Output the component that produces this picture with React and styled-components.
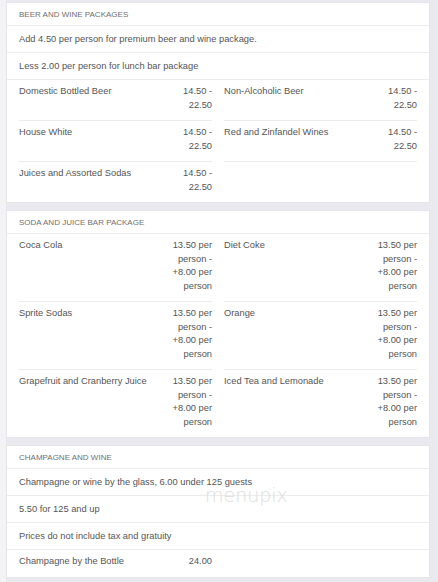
import styled, { createGlobalStyle } from "styled-components";

const GlobalStyle = createGlobalStyle`
    * { box-sizing: border-box; }
    body {
        margin: 0;
        background: #eeeef2;
        font-family: "Liberation Sans", Arial, sans-serif;
    }
`;

const sections = [
    {
        title: "Beer and Wine Packages",
        notes: [
            "Add 4.50 per person for premium beer and wine package.",
            "Less 2.00 per person for lunch bar package",
        ],
        items: [
            ["Domestic Bottled Beer", "14.50 - 22.50"],
            ["Non-Alcoholic Beer", "14.50 - 22.50"],
            ["House White", "14.50 - 22.50"],
            ["Red and Zinfandel Wines", "14.50 - 22.50"],
            ["Juices and Assorted Sodas", "14.50 - 22.50"],
        ],
    },
    {
        title: "Soda and Juice Bar Package",
        notes: [],
        items: [
            ["Coca Cola", "13.50 per person - +8.00 per person"],
            ["Diet Coke", "13.50 per person - +8.00 per person"],
            ["Sprite Sodas", "13.50 per person - +8.00 per person"],
            ["Orange", "13.50 per person - +8.00 per person"],
            ["Grapefruit and Cranberry Juice", "13.50 per person - +8.00 per person"],
            ["Iced Tea and Lemonade", "13.50 per person - +8.00 per person"],
        ],
    },
    {
        title: "Champagne and Wine",
        notes: [
            "Champagne or wine by the glass, 6.00 under 125 guests",
            "5.50 for 125 and up",
            "Prices do not include tax and gratuity",
        ],
        items: [["Champagne by the Bottle", "24.00"]],
    },
];

export default function App() {
    return (
        <>
            <GlobalStyle />
            <Page>
                {sections.map(section => {
                    const lastRowStart = section.items.length - (section.items.length % 2 === 0 ? 2 : 1);
                    return (
                        <Card key={section.title}>
                            <Header>{section.title}</Header>
                            {section.notes.map(note => (
                                <Note key={note}>{note}</Note>
                            ))}
                            <Items>
                                {section.items.map(([name, price], i) => (
                                    <Item key={name} $last={i >= lastRowStart}>
                                        <Name>{name}</Name>
                                        <Price>{price}</Price>
                                    </Item>
                                ))}
                            </Items>
                        </Card>
                    );
                })}
                <Watermark>menupix</Watermark>
            </Page>
        </>
    );
}

const Page = styled.div`
    position: relative;
    width: 438px;
    padding: 2px 8px 6px 6px;
    display: flex;
    flex-direction: column;
    gap: 7px;
    background: linear-gradient(to right, #f3f3f5 0, #f3f3f5 6px, #e9e9ef 6px);
`;

const Card = styled.div`
    background: #ffffff;
    border: 1px solid #e6e6ea;
`;

const Header = styled.div`
    padding: 6px 12px 5px;
    font-size: 8px;
    line-height: 11px;
    text-transform: uppercase;
    color: #6f6f6f;
    border-bottom: 1px solid #ececef;
`;

const Note = styled.div`
    padding: 7px 12px 6px;
    font-size: 9.3px;
    line-height: 13px;
    color: #555555;
    border-bottom: 1px solid #ececef;
`;

const Items = styled.div`
    display: grid;
    grid-template-columns: 1fr 1fr;
    column-gap: 12px;
    padding: 0 12px;
`;

const Item = styled.div`
    display: flex;
    justify-content: space-between;
    align-items: flex-start;
    padding: 5px 0 8px;
    border-bottom: ${p => (p.$last ? "none" : "1px solid #ececef")};
`;

const Name = styled.span`
    font-size: 9.3px;
    line-height: 13.5px;
    color: #555555;
`;

const Price = styled.span`
    width: 46px;
    text-align: right;
    font-size: 9.3px;
    line-height: 13.5px;
    color: #555555;
`;

const Watermark = styled.div`
    position: absolute;
    left: 205px;
    top: 484px;
    font-family: "DejaVu Sans", sans-serif;
    font-weight: 200;
    font-size: 19px;
    color: #dedede;
    pointer-events: none;
`;
